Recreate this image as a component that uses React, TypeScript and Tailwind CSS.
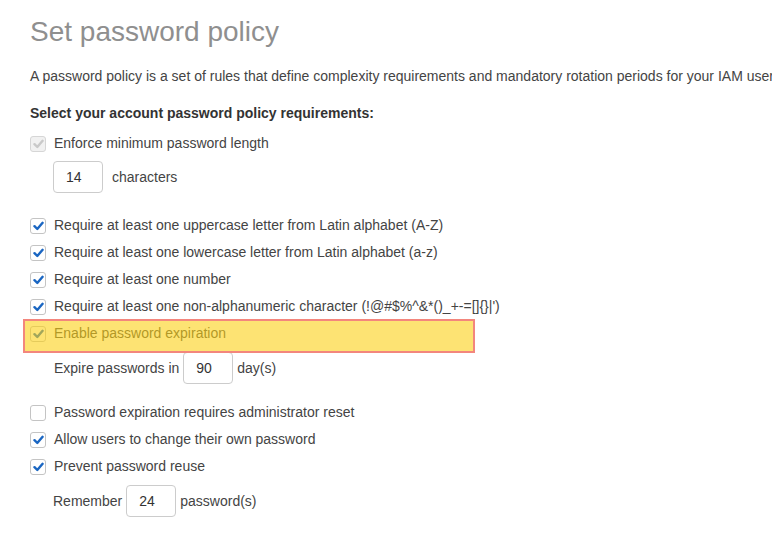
import React from 'react';

type BoxState = 'on' | 'off' | 'disabled';

const Check: React.FC<{ state: BoxState }> = ({ state }) => {
  const box =
    state === 'disabled'
      ? 'bg-[#f1f1f1] border-[#d6d6d6]'
      : 'bg-white border-[#c4c4c4]';
  const stroke = state === 'disabled' ? '#c9c9c9' : '#1a66c2';
  return (
    <span className={`flex h-4 w-4 shrink-0 items-center justify-center rounded-[3px] border ${box}`}>
      {state !== 'off' && (
        <svg width="11" height="10" viewBox="0 0 11 10">
          <path d="M1.5 5.2 L4.3 8 L9.6 1.8" fill="none" stroke={stroke} strokeWidth="2.4" strokeLinecap="round" strokeLinejoin="round" />
        </svg>
      )}
    </span>
  );
};

const CheckRow: React.FC<{ state?: BoxState; label: string }> = ({ state = 'on', label }) => (
  <div className="flex h-[27px] items-center gap-2">
    <Check state={state} />
    <span className="whitespace-nowrap">{label}</span>
  </div>
);

const NumBox: React.FC<{ value: string }> = ({ value }) => (
  <div className="flex h-8 w-[50px] items-center rounded-[4px] border border-[#cccccc] bg-white pl-3 text-[#333]">
    {value}
  </div>
);

const App: React.FC = () => {
  return (
    <div
      className="h-[558px] w-[772px] overflow-hidden bg-white pl-[30px] text-[14px] text-[#444]"
      style={{ fontFamily: '"Liberation Sans", Arial, sans-serif' }}
    >
      <h1 className="pt-[14px] text-[28px] leading-[36px] text-[#8f8f8f]">Set password policy</h1>

      <p className="mt-[16px] whitespace-nowrap leading-[20px]">
        A password policy is a set of rules that define complexity requirements and mandatory rotation periods for your IAM users.
      </p>

      <p className="mt-[17px] whitespace-nowrap font-bold leading-[20px] text-[#333]">
        Select your account password policy requirements:
      </p>

      <div className="mt-[7px]">
        <CheckRow state="disabled" label="Enforce minimum password length" />
        <div className="ml-[23px] mt-[4px] flex items-center gap-[9px]">
          <NumBox value="14" />
          <span>characters</span>
        </div>

        <div className="mt-[19px]">
          <CheckRow label="Require at least one uppercase letter from Latin alphabet (A-Z)" />
          <CheckRow label="Require at least one lowercase letter from Latin alphabet (a-z)" />
          <CheckRow label="Require at least one number" />
          <CheckRow label="Require at least one non-alphanumeric character (!@#$%^&*()_+-=[]{}|')" />
          <div className="relative">
            <CheckRow label="Enable password expiration" />
            {/* highlight annotation */}
            <div className="absolute -left-[7px] -top-px h-[34px] w-[452px] border-2 border-[#f3867d] bg-[#fbd015]/60" />
          </div>
        </div>

        <div className="ml-6 mt-[5px] flex items-center gap-1">
          <span>Expire passwords in</span>
          <NumBox value="90" />
          <span>day(s)</span>
        </div>

        <div className="mt-[15px]">
          <CheckRow state="off" label="Password expiration requires administrator reset" />
          <CheckRow label="Allow users to change their own password" />
          <CheckRow label="Prevent password reuse" />
        </div>

        <div className="ml-[23px] mt-[5px] flex items-center gap-1">
          <span>Remember</span>
          <NumBox value="24" />
          <span>password(s)</span>
        </div>
      </div>
    </div>
  );
};

export default App;
